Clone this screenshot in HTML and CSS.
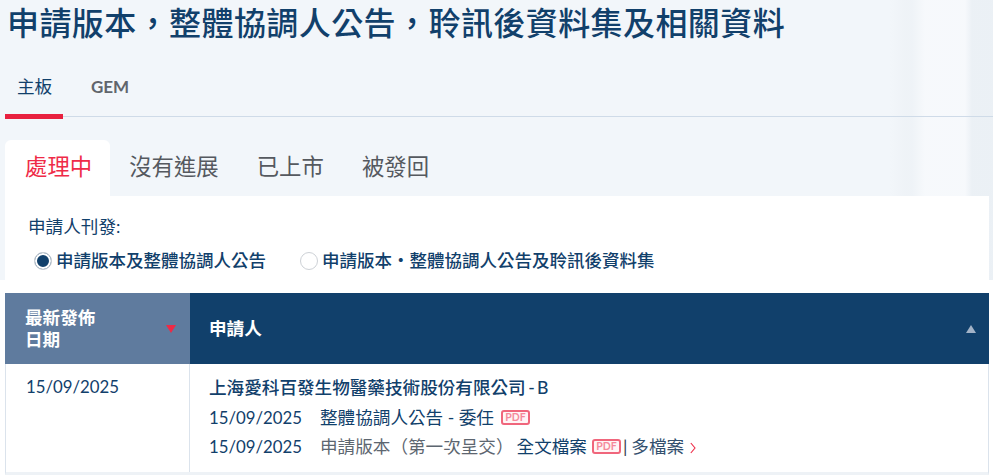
FILE: index.html
```html
<!DOCTYPE html>
<html lang="zh-Hant">
<head>
<meta charset="utf-8">
<title>申請版本</title>
<link rel="stylesheet" href="styles.css">
</head>
<body>
<div class="bg-stripes"></div>
<main class="page">
  <h1 class="title">申請版本，整體協調人公告，聆訊後資料集及相關資料</h1>
  <nav class="board-tabs">
    <a class="board-tab active">主板</a>
    <a class="board-tab gem">GEM</a>
  </nav>
  <div class="status-tabs">
    <a class="status-tab active">處理中</a>
    <a class="status-tab">沒有進展</a>
    <a class="status-tab">已上市</a>
    <a class="status-tab">被發回</a>
  </div>
  <section class="filter">
    <div class="filter-label">申請人刊發:</div>
    <div class="radios">
      <label class="radio on"><span class="dot"></span>申請版本及整體協調人公告</label>
      <label class="radio"><span class="dot"></span>申請版本・整體協調人公告及聆訊後資料集</label>
    </div>
  </section>
  <section class="table">
    <div class="thead">
      <div class="th th-date">
        <span>最新發佈<br>日期</span>
        <svg class="sort" width="10" height="8" viewBox="0 0 10 8"><path d="M0 0H10L5 8Z" fill="#ee2a46"/></svg>
      </div>
      <div class="th th-name">
        <span>申請人</span>
        <svg class="sort" width="10" height="8" viewBox="0 0 10 8"><path d="M5 0L10 8H0Z" fill="#a3b3c7"/></svg>
      </div>
    </div>
    <div class="row">
      <div class="cell-date">15/09/2025</div>
      <div class="cell-name">
        <div class="company">上海愛科百發生物醫藥技術股份有限公司 - B</div>
        <div class="doc"><span class="doc-date">15/09/2025</span><span class="doc-name">整體協調人公告 - 委任</span><span class="pdf">PDF</span></div>
        <div class="doc"><span class="doc-date">15/09/2025</span><span class="doc-name grey">申請版本（第一次呈交）</span><span class="doc-name full">全文檔案</span><span class="pdf">PDF</span><span class="sep">|</span><span class="doc-name multi">多檔案</span><svg class="chev" width="6" height="12" viewBox="0 0 6 12"><path d="M0.8 1L5 6L0.8 11" fill="none" stroke="#ee2a46" stroke-width="1.1"/></svg></div>
      </div>
    </div>
  </section>
</main>
</body>
</html>
```
FILE: styles.css
```css
* { box-sizing: border-box; }
html, body { margin: 0; height: 475px; overflow: hidden; }
body {
  background: #fff;
  font-family: "Lato", "Noto Sans CJK TC", sans-serif;
  color: #11406b;
  position: relative;
}
.bg-stripes {
  position: absolute;
  top: 0; left: 0; right: 0; height: 280px;
  background:
    linear-gradient(90deg, rgba(255,255,255,0) 0, rgba(255,255,255,0) 890px, rgba(232,237,242,.35) 905px, rgba(232,237,242,.35) 912px, rgba(255,255,255,.35) 925px, rgba(255,255,255,.35) 965px, rgba(225,232,238,.4) 972px, rgba(225,232,238,.4) 993px),
    #f2f6fa;
}
.page { position: relative; padding: 0 4px 0 5px; }
.title {
  margin: 0;
  padding: 1px 0 0 2px;
  height: 67px;
  font-size: 32px;
  line-height: 44px;
  font-weight: 500;
  letter-spacing: .42px;
  color: #11406b;
}
.board-tabs {
  display: flex;
  height: 50px;
  margin-right: -4px;
  border-bottom: 1px solid #cfdbe8;
}
.board-tab {
  padding-top: 9px;
  font-size: 17.6px;
  line-height: 22px;
  color: #60656c;
}
.board-tab.gem { font-weight: 700; font-size: 17px; }
.board-tab.active {
  width: 58px;
  margin-right: 28px;
  padding-left: 12px;
  height: 52px;
  color: #11406b;
  border-bottom: 5px solid #e8213f;
}
.status-tabs { display: flex; height: 56px; margin-top: 23px; }
.status-tab {
  padding: 12px 19px 0;
  font-size: 22.4px;
  line-height: 30px;
  color: #55595f;
}
.status-tab.active {
  background: #fff;
  color: #ef2b48;
  padding: 12px 18px 0 20px;
  border-radius: 6px 6px 0 0;
}
.filter {
  background: #fff;
  height: 84px;
  padding: 19px 0 0 23px;
}
.filter-label { font-size: 17.6px; line-height: 24px; color: #11406b; }
.radios { display: flex; margin-top: 10px; margin-left: 6px; }
.radio {
  display: flex;
  align-items: center;
  font-size: 17.5px;
  line-height: 24px;
  font-weight: 500;
  color: #11406b;
  margin-right: 34px;
}
.dot {
  width: 18px; height: 18px;
  margin-right: 4px;
  border: 1px solid #cdd1d6;
  border-radius: 50%;
  background: #fff;
}
.radio.on .dot { background: #11406b; box-shadow: inset 0 0 0 2px #fff; }
.table { margin-top: 13px; }
.thead { display: flex; height: 71px; }
.th {
  display: flex;
  align-items: center;
  justify-content: space-between;
  color: #fff;
  font-size: 17.6px;
  line-height: 22px;
  font-weight: 700;
}
.th-date { width: 185px; background: #5f7b9e; padding: 0 14px 0 20px; }
.th-name { flex: 1; background: #11406b; padding: 0 13px 0 19px; }
.row {
  display: flex;
  height: 111px;
  border-left: 1px solid #dbe3ec;
  border-right: 1px solid #dbe3ec;
  border-bottom: 3px solid #eef2f6;
}
.cell-date {
  width: 184px;
  padding: 11px 0 0 20px;
  font-size: 16.8px;
  line-height: 24px;
  color: #11406b;
  border-right: 1px solid #dbe3ec;
}
.cell-name { flex: 1; padding: 12px 0 0 19px; }
.company { font-size: 17.6px; line-height: 24px; font-weight: 500; word-spacing: -2px; color: #11406b; height: 27px; }
.doc { display: flex; align-items: center; height: 29px; font-size: 17.6px; line-height: 24px; color: #11406b; }
.doc-date { width: 111px; font-size: 16.8px; }
.doc-name.grey { color: #5d6670; margin-right: 3px; }
.doc-name.multi { color: #33506e; }
.pdf {
  margin-left: 7px;
  width: 29px; height: 15px;
  border: 2px solid #f0667c;
  border-radius: 3px;
  background: #fff5f6;
  color: #f58a9c;
  font-size: 10.5px;
  line-height: 11px;
  font-weight: 700;
  text-align: center;
}
.doc-name.full + .pdf { margin-left: 5px; }
.sep { margin: 0 4px 0 2px; color: #33404d; }
.chev { margin-left: 6px; margin-top: 3px; }
```
